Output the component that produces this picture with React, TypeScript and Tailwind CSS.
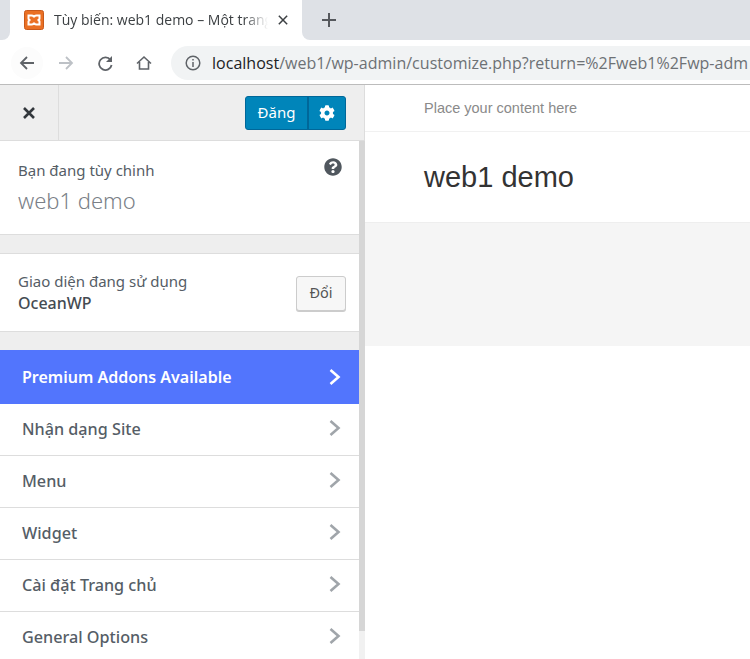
import React from 'react';
import { FaCog, FaQuestionCircle } from 'react-icons/fa';

const sans = '[font-family:"Noto_Sans",sans-serif]';

const Chevron = ({ className }: { className: string }) => (
  <svg viewBox="0 0 12 18" className={`w-3 h-[18px] ${className}`} fill="none" stroke="currentColor" strokeWidth="2.6">
    <path d="M1.500 2l8 7-8 7" />
  </svg>
);

const rows = ['Nhận dạng Site', 'Menu', 'Widget', 'Cài đặt Trang chủ', 'General Options'];

export default function App() {
  return (
    <div className="w-[750px] h-[659px] overflow-hidden bg-white flex flex-col">
      {/* tab strip */}
      <div className="h-10 flex bg-white shrink-0 [font-family:'Open_Sans',sans-serif]">
        <div className="w-2.5 bg-[#dee1e6] rounded-br-lg" />
        <div className="w-[292px] bg-white rounded-t-xl flex items-center pl-[14px] pb-px">
          <svg viewBox="0 0 20 20" className="w-5 h-5 shrink-0">
            <rect x="0.500" y="0.500" width="19" height="19" rx="2" fill="#ea7024" stroke="#c8591b" />
            <path d="M4.500 5.500h3q2.500 0 2.500 2q0-2 2.500-2h3v3q0 1.500-2 1.500q2 0 2 1.500v3h-3q-2.500 0-2.500-2q0 2-2.500 2h-3v-3q0-1.500 2-1.500q-2 0-2-1.500z" fill="none" stroke="#fff" strokeWidth="2" />
          </svg>
          <span className="ml-[10px] text-[14px] text-[#3c4043] whitespace-nowrap w-[214px] overflow-hidden [mask-image:linear-gradient(to_right,black_190px,transparent_214px)]">Tùy biến: web1 demo – Một trang</span>
          <svg viewBox="0 0 12 12" className="w-[10px] h-[10px] ml-[10px]" stroke="#3c4043" strokeWidth="1.800"><path d="M1 1l10 10M11 1L1 11" /></svg>
        </div>
        <div className="flex-1 bg-[#dee1e6] rounded-bl-lg flex items-center pl-[19px]">
          <svg viewBox="0 0 16 16" className="w-4 h-4" stroke="#55585d" strokeWidth="2"><path d="M8 1v14M1 8h14" /></svg>
        </div>
      </div>
      {/* toolbar */}
      <div className="h-[45px] shrink-0 flex items-center border-b border-[#bcbcbc] bg-white [font-family:'Open_Sans',sans-serif] pl-[11px] pt-px">
        <div className="w-8 h-8 rounded-full bg-[#fcfcfc] flex items-center justify-center">
          <svg viewBox="0 0 16 16" className="w-4 h-4" fill="none" stroke="#5f6368" strokeWidth="1.800"><path d="M15 8H2M8 2L2 8l6 6" /></svg>
        </div>
        <svg viewBox="0 0 16 16" className="w-4 h-4 ml-[15px]" fill="none" stroke="#bdc1c6" strokeWidth="1.800"><path d="M1 8h13M8 2l6 6-6 6" /></svg>
        <svg viewBox="0 0 16 16" className="w-4 h-4 ml-[23px]" fill="none" stroke="#5f6368" strokeWidth="1.800"><path d="M13.500 5A6.300 6.300 0 1 0 14.600 10" /><path d="M15 1v6H9z" fill="#5f6368" stroke="none" /></svg>
        <svg viewBox="0 0 16 16" className="w-4 h-4 ml-[23px]" fill="none" stroke="#5f6368" strokeWidth="1.600"><path d="M1 8.500L8 2l7 6.500M3.500 7v7h9V7" /></svg>
        <div className="ml-[19px] flex-1 h-[34px] bg-[#f1f3f4] rounded-l-full flex items-center pl-[14px] overflow-hidden">
          <svg viewBox="0 0 16 16" className="w-4 h-4 shrink-0" fill="none" stroke="#5f6368" strokeWidth="1.500"><circle cx="8" cy="8" r="6.800" /><path d="M8 7v5M8 4v1.600" /></svg>
          <span className="ml-[11px] text-[16px] tracking-[0.02px] whitespace-nowrap text-[#6d7175]"><span className="text-[#202124]">localhost</span>/web1/wp-admin/customize.php?return=%2Fweb1%2Fwp-adm</span>
        </div>
      </div>
      <div className="flex-1 flex min-h-0">
        {/* customizer panel */}
        <div className={`w-[365px] shrink-0 flex flex-col bg-[#eeeeee] ${sans}`}>
          <div className="h-[56px] shrink-0 flex items-center border-b border-r border-[#dddddd]">
            <div className="w-[59px] h-full border-r border-[#dddddd] flex items-center justify-center">
              <svg viewBox="0 0 12 12" className="w-3 h-3" stroke="#32373c" strokeWidth="2.600"><path d="M1 1l10 10M11 1L1 11" /></svg>
            </div>
            <div className="ml-auto mr-[18px] h-[34px] w-[101px] rounded-[3px] bg-[#0085ba] border border-[#006799] flex text-white">
              <div className="w-[63px] flex items-center justify-center text-[15px] border-r-2 border-[#006799]">Đăng</div>
              <div className="flex-1 flex items-center justify-center">
                <FaCog className="w-4 h-4 text-white" />
              </div>
            </div>
          </div>
          <div className="flex-1 min-h-0 flex">
            <div className="w-[359px] shrink-0 flex flex-col">
              <div className="h-[94px] shrink-0 bg-white border-b border-[#dddddd] pl-[18px] pr-[17px] relative">
                <div className="pt-[19px] text-[15px] leading-5 text-[#555d66]">Bạn đang tùy chinh</div>
                <div className="mt-[6px] text-[22px] leading-7 font-light text-[#7a8087]">web1 demo</div>
                <FaQuestionCircle className="absolute right-[17px] top-[17px] w-[18px] h-[18px] text-[#50575e]" />
              </div>
              <div className="h-[18px] shrink-0" />
              <div className="h-[79px] shrink-0 bg-white border-y border-[#dddddd] pl-[18px] pr-[13px] flex items-center justify-between">
                <div className="pb-px">
                  <div className="text-[15px] leading-[22px] text-[#555d66]">Giao diện đang sử dụng</div>
                  <div className="text-[16px] leading-[22px] font-medium text-[#444b52]">OceanWP</div>
                </div>
                <div className="w-[50px] h-[35px] mt-px rounded-[3px] bg-[#f7f7f7] border border-[#cccccc] shadow-[0_1px_0_#cccccc] flex items-center justify-center text-[14.500px] text-[#555555]">Đổi</div>
              </div>
              <div className="h-[18px] shrink-0" />
              <div className="h-[54px] shrink-0 bg-[#5275fd] flex items-center justify-between pl-[22px] pr-[18px] text-white">
                <span className="text-[16px] font-semibold">Premium Addons Available</span>
                <Chevron className="text-white" />
              </div>
              {rows.map((r) => (
                <div key={r} className="h-[52px] shrink-0 bg-white border-b border-[#dddddd] flex items-center justify-between pl-[22px] pr-[18px] text-[#555d66]">
                  <span className="text-[16.200px] font-medium">{r}</span>
                  <Chevron className="text-[#a0a5aa] mb-[4px]" />
                </div>
              ))}
            </div>
            {/* scrollbar */}
            <div className="w-[6px] shrink-0 bg-[#f1f1f1] flex flex-col">
              <div className="h-[490px] bg-[#d6d6d6]" />
            </div>
          </div>
        </div>
        {/* preview */}
        <div className="flex-1 min-w-0 bg-white [font-family:'Liberation_Sans',sans-serif]">
          <div className="h-[47px] border-b border-[#f1f1f1] pl-[59px] pt-px flex items-center text-[14.500px] text-[#8a8a8a]">Place your content here</div>
          <div className="h-[90px] pl-[59px] pt-[2px] flex items-center text-[29px] text-[#333333]">web1 demo</div>
          <div className="h-[124px] bg-[#f5f5f5] border-t border-[#eeeeee]" />
        </div>
      </div>
    </div>
  );
}
